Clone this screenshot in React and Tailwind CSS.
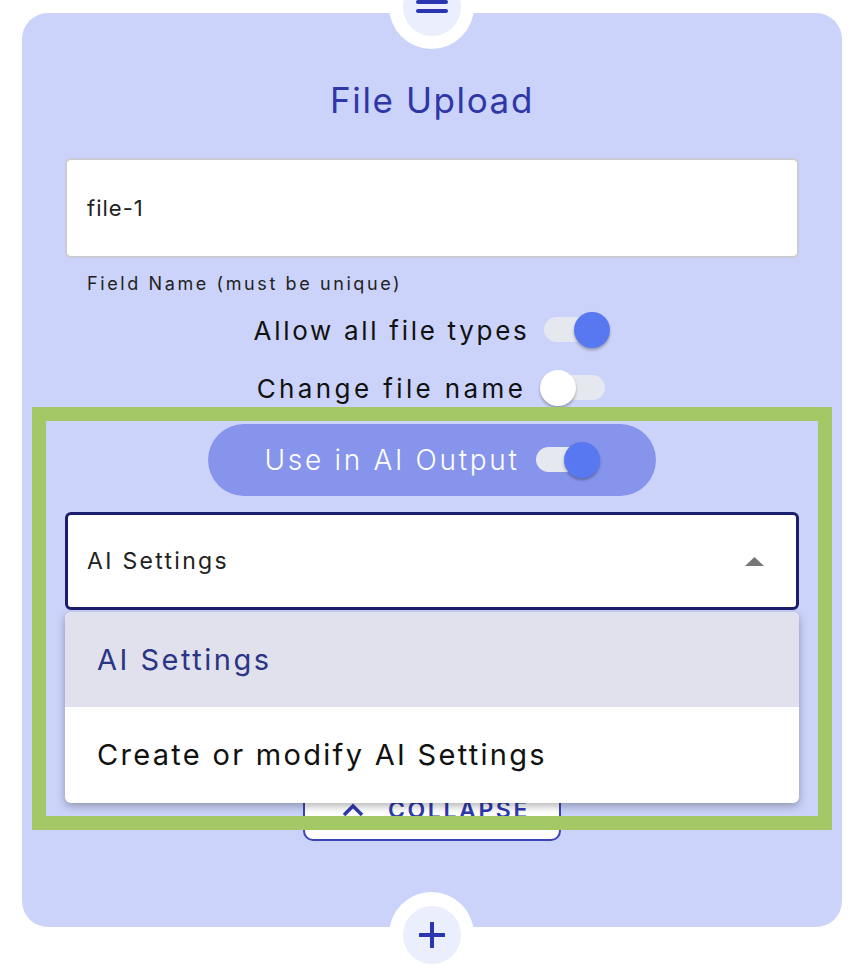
import React from "react";

function Toggle({ on, w = 66, trackRight = 2 }) {
  return (
    <div className="relative h-[36px] shrink-0" style={{ width: w }}>
      <div
        className="absolute left-0 top-[5px] h-[25px] rounded-full bg-[#e6e8ef]"
        style={{ right: trackRight }}
      />
      <div
        className={
          on
            ? "absolute right-0 top-0 w-[36px] h-[36px] rounded-full bg-[#5878f2] shadow-[0_2px_3px_rgba(0,0,0,0.3)]"
            : "absolute left-[-1px] top-0 w-[36px] h-[36px] rounded-full bg-white shadow-[0_2px_3px_rgba(0,0,0,0.3)]"
        }
      />
    </div>
  );
}

export default function App() {
  const font = { fontFamily: "Inter, 'DejaVu Sans', sans-serif" };
  return (
    <div className="relative w-[862px] h-[976px] bg-white overflow-hidden" style={font}>
      <div className="pt-[13px] pl-[22px]">
        <div className="relative w-[820px] h-[914px] rounded-[26px] bg-[#cbd3fa] flex flex-col items-center px-[43px]">
          <div className="mt-[67px] h-[40px] leading-[40px] text-[35px] text-[#2f37a7] font-normal tracking-[1.6px]">
            File Upload
          </div>
          <div className="mt-[38px] w-[734px] h-[100px] bg-white rounded-[6px] border-2 border-[#c9cad2] flex items-center pl-[20px] text-[22px] tracking-[1px] text-[#222]">
            file-1
          </div>
          <div className="self-start mt-[14px] pl-[22px] h-[24px] leading-[24px] text-[18px] tracking-[2.6px] text-[#222]">
            Field Name (must be unique)
          </div>
          <div className="mt-[14px] h-[40px] flex items-center gap-[15px]">
            <span className="text-[26px] tracking-[2.7px] text-[#111]">Allow all file types</span>
            <Toggle on />
          </div>
          <div className="mt-[18px] h-[40px] flex items-center gap-[15px]">
            <span className="text-[26px] tracking-[3.4px] text-[#111]">Change file name</span>
            <Toggle />
          </div>
          <div className="mt-[16px] w-[448px] h-[72px] rounded-full bg-[#8794ec] flex items-center justify-center gap-[16px]">
            <span className="text-[28px] font-light tracking-[2.7px] text-white">Use in AI Output</span>
            <Toggle on w={64} trackRight={7} />
          </div>
          <div className="mt-[16px] w-[734px] h-[98px] bg-white rounded-[6px] border-[3px] border-[#1b1f6b] flex items-center justify-between pl-[19px] pr-[32px] text-[23px] tracking-[2.3px] text-[#222]">
            <span>AI Settings</span>
            <svg width="19" height="9" viewBox="0 0 19 9">
              <path d="M0 9 L9.5 0 L19 9 Z" fill="#777" />
            </svg>
          </div>
          <div className="mt-[169px] w-[258px] h-[62px] rounded-[10px] border-2 border-[#3a45b8] bg-white flex items-center justify-center gap-[24px] pl-[8px]">
            <svg width="22" height="14" viewBox="0 0 22 14">
              <path d="M2 12 L11 3 L20 12" fill="none" stroke="#2e3aaf" strokeWidth="3.5" />
            </svg>
            <span className="text-[23px] font-semibold text-[#2e3aaf] tracking-[2.6px]">COLLAPSE</span>
          </div>

          {/* top handle */}
          <div className="absolute left-[367px] top-[-49px] w-[85px] h-[85px] rounded-full bg-white flex items-center justify-center">
            <div className="w-[58px] h-[58px] rounded-full bg-[#eaeefd] flex flex-col items-center justify-center gap-[5px]">
              <div className="w-[32px] h-[4px] rounded-full bg-[#2a35b0]" />
              <div className="w-[32px] h-[4px] rounded-full bg-[#2a35b0]" />
            </div>
          </div>

          {/* bottom handle */}
          <div className="absolute left-[367px] top-[879px] w-[85px] h-[85px] rounded-full bg-white flex items-center justify-center">
            <div className="w-[58px] h-[58px] rounded-full bg-[#eaeefd] flex items-center justify-center">
              <svg width="26" height="26" viewBox="0 0 26 26">
                <path d="M13 1 V25 M1 13 H25" stroke="#2a35b0" strokeWidth="4" strokeLinecap="round" />
              </svg>
            </div>
          </div>

          {/* dropdown menu */}
          <div className="absolute left-[43px] top-[599px] w-[734px] h-[191px] bg-white rounded-[6px] shadow-[0_3px_8px_rgba(0,0,0,0.3)] overflow-hidden flex flex-col">
            <div className="h-[95px] bg-[#e1e1ed] flex items-center pl-[32px] text-[29px] text-[#2b3585] tracking-[2.5px]">
              AI Settings
            </div>
            <div className="h-[96px] flex items-center pl-[32px] text-[29px] text-[#111] tracking-[2.3px]">
              Create or modify AI Settings
            </div>
          </div>
        </div>
      </div>

      {/* annotation box */}
      <div className="absolute left-[32px] top-[407px] w-[800px] h-[423px] border-[14px] border-[#a4c865] pointer-events-none" />
    </div>
  );
}
